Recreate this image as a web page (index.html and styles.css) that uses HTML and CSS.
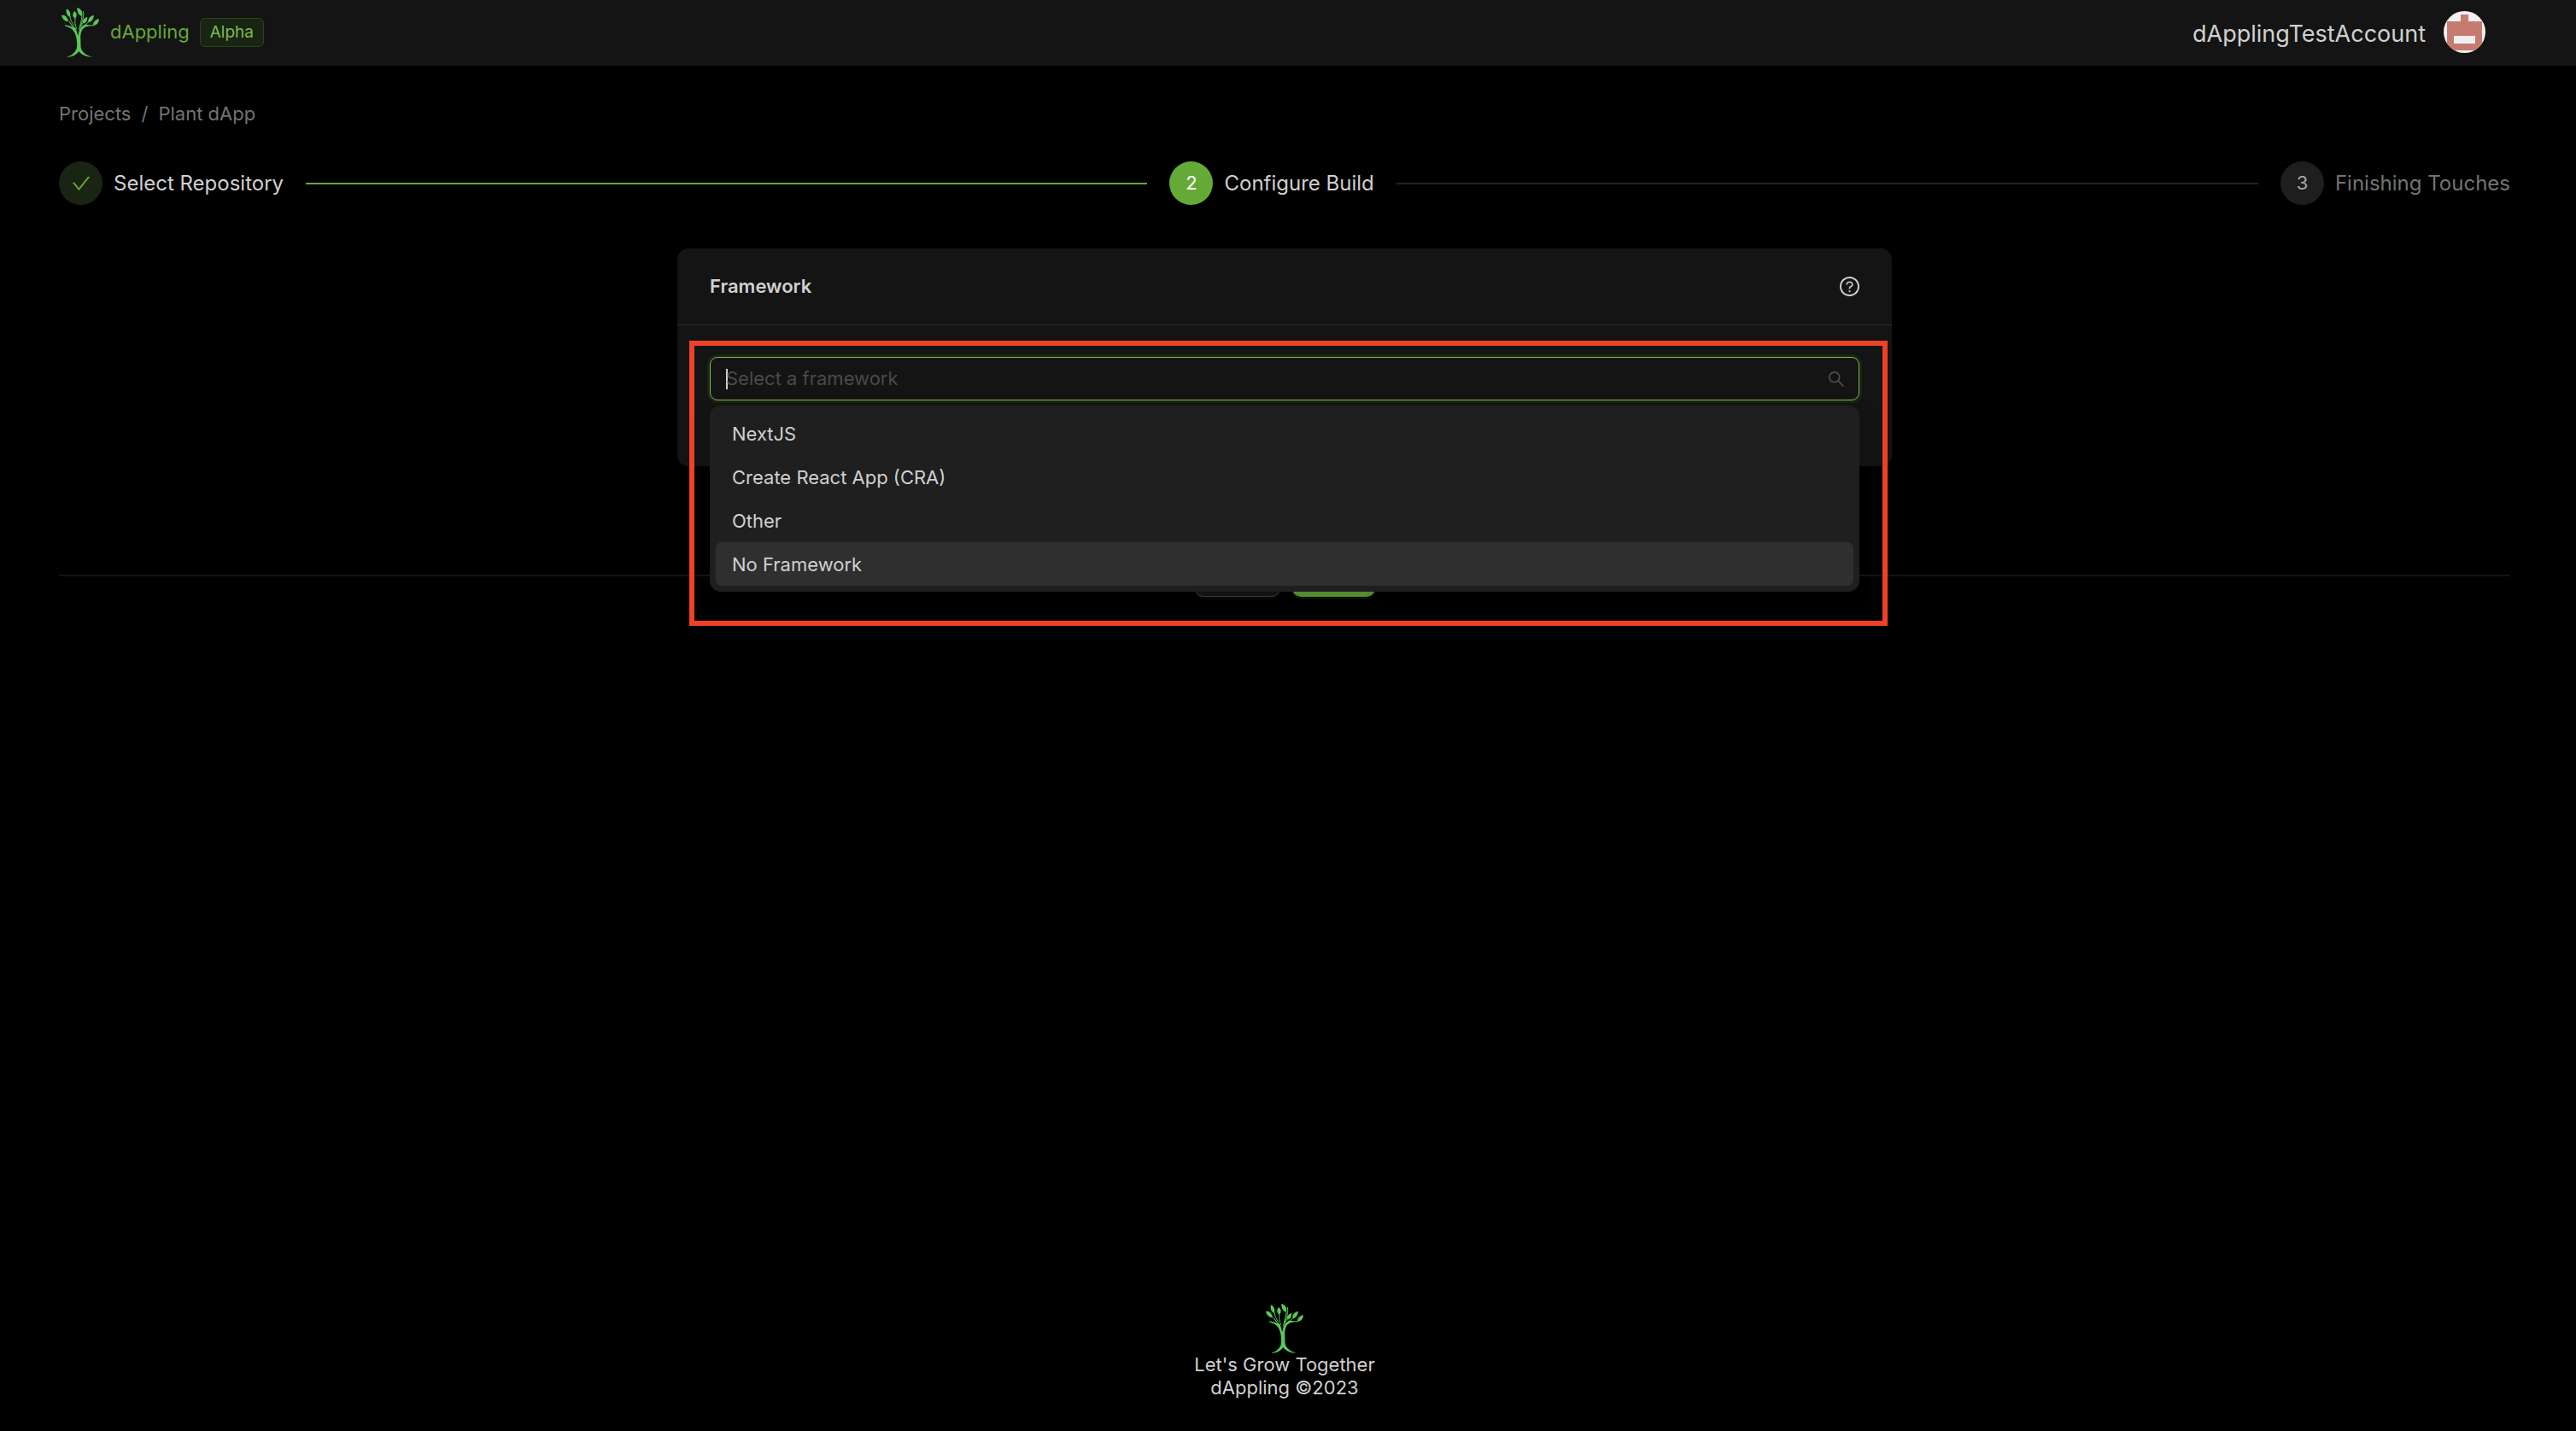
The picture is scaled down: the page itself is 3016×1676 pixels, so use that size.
FILE: index.html
```html
<!DOCTYPE html>
<html lang="en">
<head>
<meta charset="utf-8">
<meta name="viewport" content="width=device-width, initial-scale=1">
<title>dAppling</title>
<link rel="stylesheet" href="styles.css">
</head>
<body>
<svg class="defs" aria-hidden="true">
  <symbol id="tree" viewBox="0 0 132 174">
    <path d="M50 73C54 82 55 92 58 98C61 90 60 84 63 78C70 62 82 57 99 61L115 61L115 64C98 64 84 64 74 76C68 86 66 96 67 112C68 128 66 140 72 151C80 163 91 168 104 172L104 173C88 172 72 168 61 153C52 166 38 173 21 173L21 171C34 170 45 160 52 147C56 138 55 122 52 106C49 92 45 84 37 76C31 70 22 68 12 64L12 61C22 63 32 63 40 70C36 62 30 56 25 48L27 47C33 55 41 64 50 73Z"/>
    <path d="M0 27C8 25 18 27 25 48C14 50 4 42 0 27Z"/>
    <path d="M18 4C28 9 33 18 30 32C20 30 14 18 18 4Z"/>
    <path d="M46 12C54 20 56 28 48 38C38 32 37 22 46 12Z"/>
    <path d="M55 0C68 4 76 14 72 30C60 26 54 14 55 0Z"/>
    <path d="M91 33C90 48 86 55 74 55C73 44 80 35 91 33Z"/>
    <path d="M114 26C113 40 106 50 94 52C92 38 100 30 114 26Z"/>
    <path d="M132 39C131 54 124 62 111 62C110 50 120 42 132 39Z"/>
    <path class="twig" d="M30 30C31 44 36 52 44 62M48 36C46 50 48 62 53 74M72 28C72 46 64 58 62 78M76 12C80 28 74 46 66 66M75 54L64 72M94 51C91 57 84 60 78 63"/>
  </symbol>
</svg>

<header class="topbar">
  <a class="brand" href="#"><svg class="tree" aria-hidden="true"><use href="#tree"/></svg>dAppling</a>
  <span class="tag">Alpha</span>
  <span class="account">dApplingTestAccount</span>
  <svg class="avatar" viewBox="0 0 49 49" role="img" aria-label="Account avatar">
    <clipPath id="round"><circle cx="24.500" cy="24.500" r="24.500"/></clipPath>
    <g clip-path="url(#round)">
      <path fill="#f0f0f0" d="M0 0h49v49H0z"/>
      <path fill="#c67b6e" d="M20 4h9v8h16v34H4V12h16z"/>
      <path fill="#f0f0f0" d="M12 29h25v9H12z"/>
    </g>
  </svg>
</header>

<main class="page">
  <nav class="crumbs" aria-label="Breadcrumb"><a href="#">Projects</a><span>/</span><span>Plant dApp</span></nav>

  <ol class="steps">
    <li class="step done">
      <span class="dot"><svg class="check" viewBox="64 64 896 896" aria-hidden="true"><path d="M912 190h-69.900c-9.800 0-19.100 4.500-25.100 12.200L404.700 724.500 207 474a32 32 0 0 0-25.100-12.200H112c-6.700 0-10.400 7.700-6.300 12.900l273.900 347c12.800 16.200 37.400 16.200 50.300 0l488.400-618.900c4.100-5.100.4-12.800-6.300-12.800z"/></svg></span>
      <span class="name">Select Repository</span>
    </li>
    <li class="step active"><span class="dot">2</span><span class="name">Configure Build</span></li>
    <li class="step"><span class="dot">3</span><span class="name">Finishing Touches</span></li>
  </ol>

  <section class="card">
    <div class="card-head">
      <h2><label for="framework">Framework</label></h2>
      <button class="help" type="button" aria-label="Help">
        <svg viewBox="64 64 896 896" aria-hidden="true"><path d="M512 64C264.600 64 64 264.600 64 512s200.600 448 448 448 448-200.600 448-448S759.400 64 512 64zm0 820c-205.400 0-372-166.600-372-372s166.600-372 372-372 372 166.600 372 372-166.600 372-372 372z"/><path d="M623.600 316.700C593.600 290.400 554 276 512 276s-81.600 14.500-111.600 40.700C369.200 344 352 380.700 352 420v7.600c0 4.400 3.600 8 8 8h48c4.400 0 8-3.600 8-8V420c0-44.100 43.100-80 96-80s96 35.900 96 80c0 31.100-22 59.600-56.100 72.700-21.200 8.100-39.200 22.300-52.100 40.900-13.100 19-19.900 41.800-19.900 64.900V620c0 4.400 3.600 8 8 8h48c4.400 0 8-3.600 8-8v-22.700a48.300 48.300 0 0 1 30.900-44.800c59-22.700 97.100-74.700 97.100-132.500.1-39.300-17.100-76-48.300-103.300zM472 732a40 40 0 1 0 80 0 40 40 0 1 0-80 0z"/></svg>
      </button>
    </div>
    <div class="card-body">
      <div class="picker">
        <div class="field">
          <span class="caret"></span>
          <input id="framework" type="text" role="combobox" aria-expanded="true" aria-controls="options" placeholder="Select a framework">
          <svg class="search" viewBox="64 64 896 896" aria-hidden="true"><path d="M909.600 854.500L649.900 594.800C690.200 542.700 712 479 712 412c0-80.200-31.300-155.400-87.900-212.100-56.600-56.700-132-87.900-212.100-87.900s-155.500 31.300-212.100 87.900C143.200 256.500 112 331.800 112 412c0 80.100 31.300 155.500 87.900 212.100C256.500 680.800 331.800 712 412 712c67 0 130.600-21.800 182.700-62l259.700 259.600a8.200 8.200 0 0 0 11.600 0l43.600-43.500a8.200 8.200 0 0 0 0-11.600zM570.400 570.400C528 612.700 471.800 636 412 636s-116-23.300-158.400-65.600C211.300 528 188 471.800 188 412s23.300-116.100 65.600-158.400C296 211.300 352.200 188 412 188s116.100 23.200 158.400 65.600S636 352.200 636 412s-23.300 116.100-65.600 158.400z"/></svg>
        </div>
        <ul class="options" id="options" role="listbox" aria-label="Framework">
          <li role="option" aria-selected="false">NextJS</li>
          <li role="option" aria-selected="false">Create React App (CRA)</li>
          <li role="option" aria-selected="false">Other</li>
          <li class="hover" role="option" aria-selected="true">No Framework</li>
        </ul>
        <div class="highlight"></div>
      </div>
    </div>
  </section>

  <div class="actions">
    <button class="btn" type="button">Back</button>
    <button class="btn primary" type="button">Next</button>
  </div>
</main>

<footer class="footer">
  <svg class="tree" aria-hidden="true"><use href="#tree"/></svg>
  <span>Let's Grow Together</span>
  <span>dAppling ©2023</span>
</footer>
</body>
</html>
```
FILE: styles.css
```css
* { box-sizing: border-box; }

body {
  --green: #65a937;
  --text: #d0d0d0;
  --muted: #737373;
  --surface: #141414;
  margin: 0;
  min-height: 100vh;
  display: flex;
  flex-direction: column;
  background: #000;
  color: var(--text);
  font: 22px/35px Inter, "Liberation Sans", sans-serif;
}

a { color: inherit; text-decoration: none; }
button, input { font: inherit; color: inherit; }
.defs { position: absolute; width: 0; height: 0; }

.tree { width: 44px; height: 58px; fill: #58c858; flex: none; }
.twig { fill: none; stroke: #58c858; stroke-width: 3px; }

.topbar {
  display: flex;
  align-items: center;
  height: 77px;
  padding: 0 106px 2px 72px;
  background: var(--surface);
}
.brand { display: flex; align-items: center; gap: 13px; color: var(--green); }
.tag {
  margin-left: 12px;
  padding: 0 11px;
  border: 1px solid #274916;
  border-radius: 6px;
  background: #192412;
  color: #7ebd50;
  font-size: 19px;
  line-height: 32px;
}
.account { margin-left: auto; font-size: 27px; line-height: 40px; padding-top: 4px; }
.avatar { width: 49px; height: 49px; margin-left: 21px; }

.page { flex: 1; padding: 39px 77px 0 69px; }
.crumbs { display: flex; gap: 12px; height: 35px; line-height: 35px; color: var(--muted); }

.steps {
  display: flex;
  gap: 26px;
  margin: 38px 0 51px;
  padding: 0;
  list-style: none;
  font-size: 24px;
}
.step { display: flex; align-items: center; flex: 1; white-space: nowrap; color: var(--muted); }
.step:last-child { flex: none; }
.step:not(:last-child)::after { content: ""; flex: 1; height: 2px; margin-left: 26px; background: #222; }
.step.done::after { background: var(--green); }
.done, .active { color: var(--text); }
.dot {
  display: grid;
  place-items: center;
  width: 51px;
  height: 51px;
  margin-right: 13px;
  border-radius: 50%;
  background: #1e1e1e;
  color: #a6a6a6;
  font-size: 22px;
}
.done .dot { background: #192412; }
.active .dot { background: var(--green); color: #fff; }
.check { width: 22px; height: 22px; fill: var(--green); }

.card { width: calc(50% - 13px); margin: 0 auto; border-radius: 13px; background: var(--surface); }
.card-head {
  display: flex;
  align-items: center;
  justify-content: space-between;
  height: 90px;
  padding: 0 38px;
  border-bottom: 1px solid #303030;
}
.card-head h2 { margin: 0; font-size: 22px; font-weight: 600; }
.help { display: flex; padding: 0; border: 0; background: none; }
.help svg { width: 23px; height: 23px; fill: var(--text); }
.card-body { height: 165px; padding: 37px 38px; }

.picker { position: relative; }
.field {
  display: flex;
  align-items: center;
  height: 51px;
  padding: 0 16px 0 18px;
  border: 1px solid #7ebd50;
  border-radius: 9px;
  box-shadow: 0 0 0 3px #192412;
}
.field input { flex: 1; height: 35px; padding: 0; border: 0; outline: 0; background: none; }
.field input::placeholder { color: #4a4a4a; opacity: 1; }
.caret { width: 2px; height: 24px; margin-right: -2px; background: var(--text); }
.search { width: 20px; height: 20px; fill: #4f4f4f; }

.options {
  position: absolute;
  top: 57px;
  left: 0;
  right: 0;
  margin: 0;
  padding: 7px;
  list-style: none;
  border-radius: 13px;
  background: #1f1f1f;
  box-shadow: 0 10px 26px rgba(0, 0, 0, .1);
}
.options li { padding: 9px 19px 7px; border-radius: 7px; }
.options .hover { background: #2f2f2f; }

.highlight { position: absolute; top: -19px; left: -24px; right: -33px; height: 334px; border: 6px solid #ee4126; pointer-events: none; }

.actions { display: flex; align-items: center; gap: 14px; margin-top: 102px; }
.actions::before, .actions::after { content: ""; flex: 1; height: 2px; background: #141414; }
.btn {
  width: 100px;
  height: 51px;
  padding: 0;
  border: 1px solid #424242;
  border-radius: 10px;
  background: #141414;
  box-shadow: 0 3px 0 #080808;
}
.btn.primary { width: 97px; border: 0; background: #5a9632; color: #fff; box-shadow: 0 3px 0 #0a120a; }

.footer {
  display: flex;
  flex-direction: column;
  align-items: center;
  padding: 0 8px 37px 0;
  line-height: 27px;
}
```
